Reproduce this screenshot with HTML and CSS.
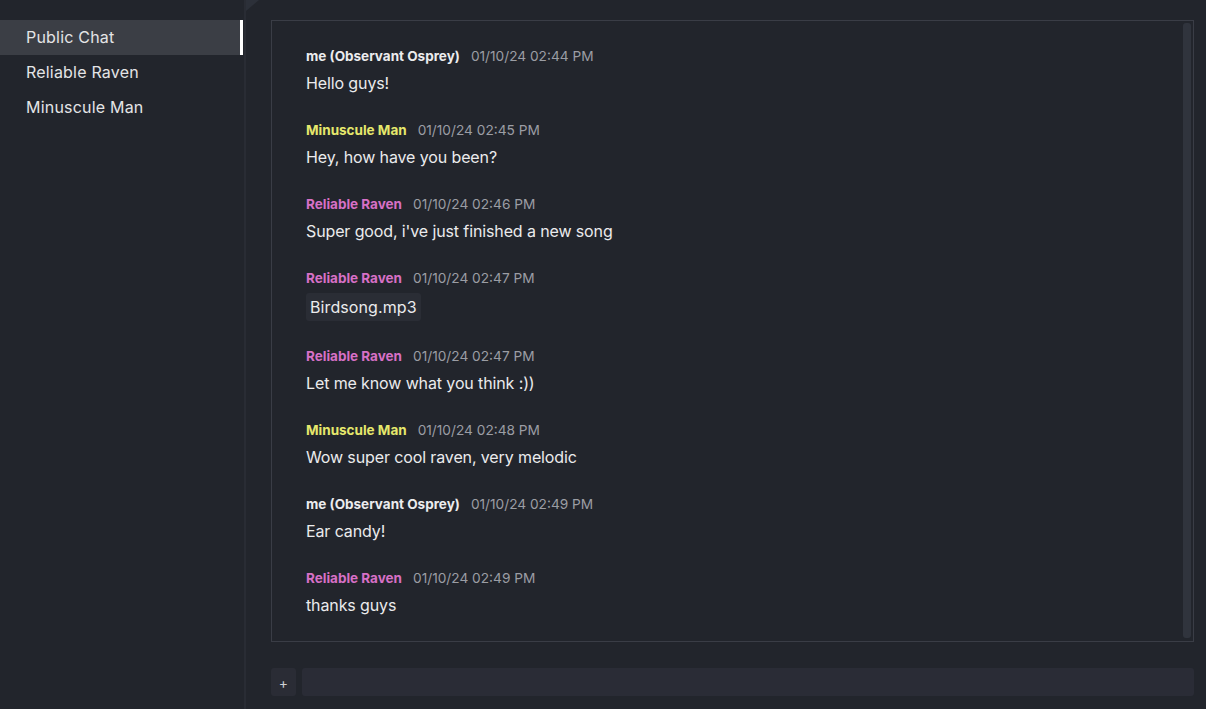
FILE: index.html
```html
<!DOCTYPE html>
<html>
<head>
<meta charset="utf-8">
<link rel="stylesheet" href="styles.css">
</head>
<body>
<div class="app">
  <nav class="sidebar">
    <ul class="rooms">
      <li class="room active">Public Chat</li>
      <li class="room">Reliable Raven</li>
      <li class="room">Minuscule Man</li>
    </ul>
  </nav>
  <main class="main">
    <span class="corner"></span>
    <section class="chat">
      <div class="messages">
        <div class="msg">
          <div class="meta"><span class="name me">me (Observant Osprey)</span><span class="time">01/10/24 02:44 PM</span></div>
          <div class="text">Hello guys!</div>
        </div>
        <div class="msg">
          <div class="meta"><span class="name man">Minuscule Man</span><span class="time">01/10/24 02:45 PM</span></div>
          <div class="text">Hey, how have you been?</div>
        </div>
        <div class="msg">
          <div class="meta"><span class="name raven">Reliable Raven</span><span class="time">01/10/24 02:46 PM</span></div>
          <div class="text">Super good, i've just finished a new song</div>
        </div>
        <div class="msg">
          <div class="meta"><span class="name raven">Reliable Raven</span><span class="time">01/10/24 02:47 PM</span></div>
          <div class="file">Birdsong.mp3</div>
        </div>
        <div class="msg">
          <div class="meta"><span class="name raven">Reliable Raven</span><span class="time">01/10/24 02:47 PM</span></div>
          <div class="text">Let me know what you think :))</div>
        </div>
        <div class="msg">
          <div class="meta"><span class="name man">Minuscule Man</span><span class="time">01/10/24 02:48 PM</span></div>
          <div class="text">Wow super cool raven, very melodic</div>
        </div>
        <div class="msg">
          <div class="meta"><span class="name me">me (Observant Osprey)</span><span class="time">01/10/24 02:49 PM</span></div>
          <div class="text">Ear candy!</div>
        </div>
        <div class="msg">
          <div class="meta"><span class="name raven">Reliable Raven</span><span class="time">01/10/24 02:49 PM</span></div>
          <div class="text">thanks guys</div>
        </div>
      </div>
      <div class="scrollbar"></div>
    </section>
    <div class="composer">
      <button class="attach">+</button>
      <div class="input"></div>
    </div>
  </main>
</div>
</body>
</html>
```
FILE: styles.css
```css
* { box-sizing: border-box; }
html, body { margin: 0; height: 100%; }
body {
  background: #22252c;
  color: #e6e6e8;
  font-family: Inter, "Noto Sans", sans-serif;
  overflow: hidden;
}
.app {
  display: flex;
  height: 709px;
}
.sidebar {
  width: 246px;
  flex: none;
  border-right: 2px solid #292c34;
  padding-top: 20px;
}
.rooms {
  list-style: none;
  margin: 0;
  padding: 0;
  width: 243px;
}
.room {
  height: 35px;
  line-height: 35px;
  padding-left: 26px;
  font-size: 16px;
  letter-spacing: 0.2px;
  color: #e4e4e6;
  border-right: 3px solid transparent;
}
.room.active {
  background: #3b3e45;
  border-right-color: #ffffff;
}
.main {
  position: relative;
  flex: 1;
  display: flex;
  flex-direction: column;
  padding: 20px 12px 13px 25px;
  gap: 26px;
  min-width: 0;
}
.corner {
  position: absolute;
  left: 0;
  top: 0;
  width: 0;
  height: 0;
  border-top: 11px solid #2c3039;
  border-right: 13px solid transparent;
}
.chat {
  flex: 1;
  display: flex;
  border: 1px solid #3a3d46;
  min-height: 0;
}
.messages {
  flex: 1;
  padding: 25px 34px 0 34px;
  display: flex;
  flex-direction: column;
  gap: 25px;
}
.msg {
  display: flex;
  flex-direction: column;
  align-items: flex-start;
  gap: 5px;
}
.meta {
  display: flex;
  align-items: center;
  gap: 11px;
  height: 20px;
}
.name { font-weight: 700; font-size: 13.5px; }
.name.me { color: #ececee; }
.name.man { color: #e6e86c; }
.name.raven { color: #d770c6; }
.time { color: #9b9da4; font-size: 13.7px; }
.text {
  font-size: 16px;
  line-height: 24px;
  letter-spacing: -0.12px;
  color: #ebebed;
}
.file {
  font-size: 16px;
  line-height: 20px;
  letter-spacing: 0.1px;
  padding: 4px 4px;
  background: #2a2d35;
  border-radius: 3px;
  color: #ebebed;
}
.scrollbar {
  width: 8px;
  flex: none;
  margin: 2px 2px 3px 0;
  background: #30343d;
  border-radius: 3px;
}
.composer {
  display: flex;
  gap: 6px;
  height: 28px;
  flex: none;
}
.attach {
  width: 25px;
  border: none;
  border-radius: 3px;
  background: #2a2c35;
  color: #cfd0d4;
  font-family: Inter, "Noto Sans", sans-serif;
  font-size: 14px;
  padding: 0;
}
.input {
  flex: 1;
  background: #2a2c36;
  border-radius: 3px;
}
```
